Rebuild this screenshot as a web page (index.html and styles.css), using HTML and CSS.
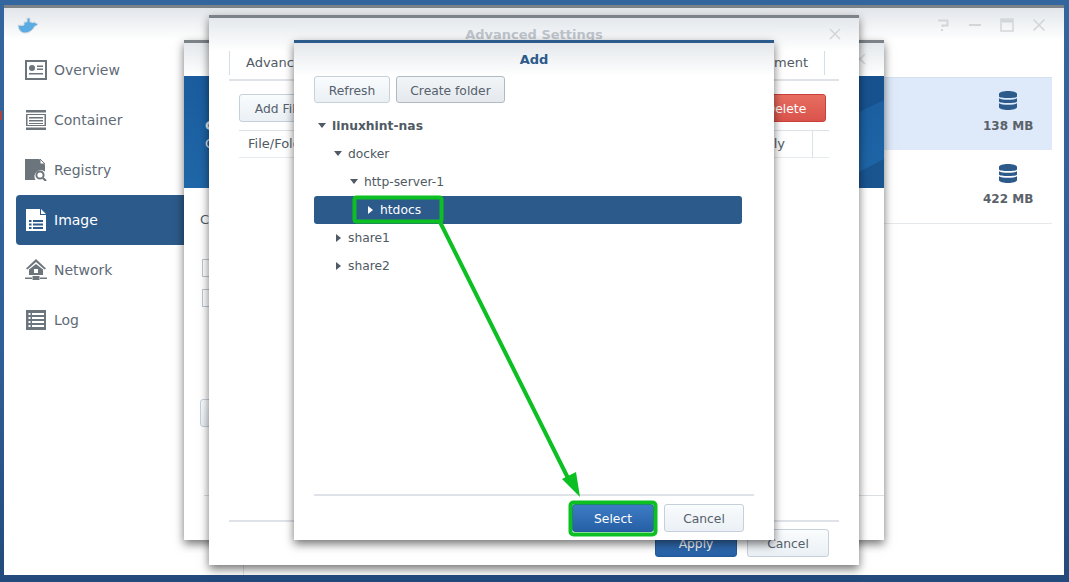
FILE: index.html
```html
<!DOCTYPE html>
<html lang="en">
<head>
  <meta charset="UTF-8" />
  <title>Docker - Add</title>
  <link rel="stylesheet" href="styles.css">
</head>
<body>
  <div class="desktop">
    <i class="desk-tick"></i>
    <!-- main docker window -->
    <div class="window main-win">
      <div class="win-head">
        <svg class="whale" width="22" height="18" viewBox="0 0 22 18">
          <path d="M1 9c2 .5 5 .5 6 0V6h3V2h3v4h2v1c1-1 2.500-1 3-.5.5 1 2 1 3 1.500-1 1.500-2.500 2-3.500 2.500C16 14 12 17 8 17 4 17 1.500 14 1 9z" fill="#5aace2" stroke="#d5dadf" stroke-width="1"/>
        </svg>
        <div class="win-tools">
          <svg width="14" height="14" viewBox="0 0 14 14"><path d="M2 2.500h9.500v5H6.500V9M6 11v2" fill="none" stroke="#d3d6d9" stroke-width="2"/></svg>
          <svg width="14" height="14" viewBox="0 0 14 14"><path d="M1 7h12" stroke="#d3d6d9" stroke-width="2"/></svg>
          <svg width="14" height="14" viewBox="0 0 14 14"><path d="M1 1h12v12H1z" fill="none" stroke="#d3d6d9" stroke-width="1.500"/><path d="M1 3h12" stroke="#d3d6d9" stroke-width="3"/></svg>
          <svg width="14" height="14" viewBox="0 0 14 14"><path d="M1.500 1.500l11 11M12.500 1.500l-11 11" stroke="#d3d6d9" stroke-width="1.600"/></svg>
        </div>
      </div>
      <div class="win-body">
        <ul class="side">
          <li class="side-item">
            <svg class="side-icon" viewBox="0 0 22 20"><path fill-rule="evenodd" d="M0 0h22v20H0zM2 2v16h18V2z"/><circle cx="7" cy="8" r="3"/><path d="M12 5.500h6v1.500h-6zM12 8.500h6V10h-6zM4 13h14v1.500H4z"/></svg>
            Overview
          </li>
          <li class="side-item">
            <svg class="side-icon" viewBox="0 0 22 20"><path d="M1 0h20v2.500H1zM1 17.500h20V20H1zM1 4h20v1H1zM1 15h20v1H1zM1 4h1.500v12H1zM19.500 4H21v12h-1.500zM4 7h14v1.500H4zM4 10h14v1.500H4zM4 13h14v1H4z"/></svg>
            Container
          </li>
          <li class="side-item">
            <svg class="side-icon" viewBox="0 0 22 22"><path d="M0 0h14l6 6v6.500a6.500 6.500 0 0 0-9.500 8.500H0z"/><path d="M15 0l5 5h-5z" fill="#fff" stroke="#6c757c"/><circle cx="15" cy="16" r="3.600" fill="none" stroke="#6c757c" stroke-width="2"/><path d="M18 19l3 3" stroke="#6c757c" stroke-width="2.200"/></svg>
            Registry
          </li>
          <li class="side-item on">
            <svg class="side-icon" viewBox="0 0 22 22"><path d="M1 0h14v6h6v16H1zM16 0l5 5h-5z" fill="#fff"/><path fill="#2c5a8a" d="M4 11h2.500v2H4zM8 11h10v2H8zM4 14.500h2.500v2H4zM8 14.500h10v2H8zM4 18h2.500v2H4zM8 18h10v2H8z"/></svg>
            Image
          </li>
          <li class="side-item">
            <svg class="side-icon" viewBox="0 0 22 22"><path d="M11 0L1 9.500l1.500 1L11 3l8.500 7.500 1.500-1z"/><path fill-rule="evenodd" d="M4 10.500L11 5l7 5.500V16H4zM9 10v4h4v-4z"/><path d="M0 18.500h7V20H0zM15 18.500h7V20h-7zM7.500 17h7v4h-7z"/></svg>
            Network
          </li>
          <li class="side-item">
            <svg class="side-icon" viewBox="0 0 22 22"><path fill-rule="evenodd" d="M1 1h20v20H1zM3.500 4v2h2V4zM7 4v2h12V4zM3.500 8v2h2V8zM7 8v2h12V8zM3.500 12v2h2v-2zM7 12v2h12v-2zM3.500 16v2h2v-2zM7 16v2h12v-2z"/></svg>
            Log
          </li>
        </ul>
        <div class="images">
          <div class="image-row on">
            <svg class="db" width="18" height="19" viewBox="0 0 18 19"><use href="#db"/></svg>
            <span>138 MB</span>
          </div>
          <div class="image-row">
            <svg class="db" width="18" height="19" viewBox="0 0 18 19"><use href="#db"/></svg>
            <span>422 MB</span>
          </div>
        </div>
      </div>
    </div>

    <!-- create container wizard, furthest back -->
    <div class="dialog wizard">
      <div class="dlg-head">
        <svg class="dlg-close" width="12" height="12" viewBox="0 0 12 12"><path d="M1 1l10 10M11 1L1 11" stroke="#d3d6d9" stroke-width="1.500"/></svg>
      </div>
      <div class="banner">
        <b>C</b>
        <span>C</span>
        <svg class="banner-art" width="25" height="112" viewBox="0 0 25 112">
          <path d="M0 96L25 83V112H0z" fill="#1a5590"/>
          <path d="M0 0H25V24L0 36z" fill="#17528f"/>
        </svg>
      </div>
      <div class="wizard-body">
        <p>C</p>
        <i class="check"></i>
        <i class="check"></i>
        <button class="btn wiz-btn">&nbsp;</button>
      </div>
      <div class="dlg-line wiz-line"></div>
    </div>

    <!-- advanced settings -->
    <div class="dialog advanced">
      <div class="dlg-head">
        <span class="dlg-title faded">Advanced Settings</span>
        <svg class="dlg-close" width="12" height="12" viewBox="0 0 12 12"><path d="M1 1l10 10M11 1L1 11" stroke="#d3d6d9" stroke-width="1.500"/></svg>
      </div>
      <div class="tabs">
        <span>Advanced Settings</span>
        <span>Environment</span>
      </div>
      <div class="adv-tools">
        <button class="btn">Add File</button>
        <button class="btn btn-red">Delete</button>
      </div>
      <div class="adv-table">
        <span>File/Folder</span>
        <span class="col-ro">Read-Only</span>
        <span class="col-end"></span>
      </div>
      <div class="dlg-foot">
        <button class="btn btn-blue">Apply</button>
        <button class="btn">Cancel</button>
      </div>
    </div>

    <!-- folder picker -->
    <div class="dialog picker">
      <div class="dlg-head">
        <span class="dlg-title">Add</span>
      </div>
      <div class="pick-tools">
        <button class="btn">Refresh</button>
        <button class="btn btn-alt">Create folder</button>
      </div>
      <ul class="tree">
        <li class="node lv0 root"><i class="arr down"></i>linuxhint-nas</li>
        <li class="node lv1"><i class="arr down"></i>docker</li>
        <li class="node lv2"><i class="arr down"></i>http-server-1</li>
        <li class="node lv3 sel"><i class="arr"></i>htdocs</li>
        <li class="node lv1"><i class="arr"></i>share1</li>
        <li class="node lv1"><i class="arr"></i>share2</li>
      </ul>
      <div class="pick-foot">
        <button class="btn btn-blue select">Select</button>
        <button class="btn">Cancel</button>
      </div>
    </div>

    <!-- green annotation drawn over the screenshot -->
    <svg class="marks" width="1069" height="582" viewBox="0 0 1069 582">
      <rect x="354.500" y="197.500" width="87" height="24" rx="2" fill="none" stroke="#0cbf22" stroke-width="4"/>
      <rect x="570.500" y="502.500" width="85" height="32" rx="3" fill="none" stroke="#0cbf22" stroke-width="4"/>
      <path d="M440 222L571 484" stroke="#0cbf22" stroke-width="4" fill="none"/>
      <path d="M580 497L562 479 576 472z" fill="#0cbf22"/>
    </svg>

    <svg width="0" height="0" class="defs">
      <symbol id="db" viewBox="0 0 18 19">
        <path fill="#2c5a8a" d="M0 3c0-4 18-4 18 0v2.500c0 2-18 2-18 0zM0 7.200c3 2 15 2 18 0v3.300c0 2-18 2-18 0zM0 12.200c3 2 15 2 18 0V16c0 4-18 4-18 0z"/>
      </symbol>
    </svg>
  </div>
</body>
</html>
```

FILE: styles.css
```css
* { box-sizing: border-box; }
html, body { margin: 0; padding: 0; }
body {
  font-family: 'DejaVu Sans', Verdana, sans-serif;
  font-size: 13px;
  color: #505a64;
}
.desktop {
  position: relative;
  width: 1069px;
  height: 582px;
  overflow: hidden;
  background: linear-gradient(to bottom, #33659f 0%, #2f5f98 60%, #234a7c 100%);
}
.desk-tick {
  position: absolute;
  left: 0;
  top: 111px;
  width: 2px;
  height: 9px;
  background: #a8453f;
}
.marks { position: absolute; left: 0; top: 0; }
.defs { position: absolute; }

/* main window */
.window, .dialog {
  position: absolute;
  display: flex;
  flex-direction: column;
  background: #fff;
}
.main-win {
  left: 4px;
  top: 5px;
  width: 1060px;
  height: 570px;
  border-top: 3px solid #7b8288;
}
.win-head {
  height: 32px;
  flex: none;
  display: flex;
  align-items: center;
  justify-content: space-between;
  padding: 0 18px 0 13px;
  background: linear-gradient(to bottom, #e2e6ea, #fff);
}
.whale { margin-top: 2px; }
.win-tools { display: flex; gap: 18px; margin-top: 2px; }
.win-body { flex: 1; display: flex; }
.side {
  list-style: none;
  margin: 5px 0 0 12px;
  padding: 0;
  width: 180px;
}
.side-item {
  height: 50px;
  display: flex;
  align-items: center;
  gap: 7px;
  padding-left: 9px;
  font-size: 14px;
  color: #5f6b77;
}
.side-item.on {
  background: #2c5a8a;
  color: #fff;
  border-radius: 4px 0 0 4px;
}
.side-icon { width: 22px; height: 22px; fill: #6c757c; flex: none; }
.images {
  flex: 1;
  margin: 0 0 0 47px;
  padding: 37px 12px 0 0;
  border-left: 1px solid #dfe3e7;
}
.image-row {
  height: 74px;
  padding: 0 19px 4px 0;
  display: flex;
  flex-direction: column;
  align-items: flex-end;
  justify-content: center;
  border-bottom: 1px solid #e6e9ec;
  font-size: 12px;
  font-weight: bold;
  color: #5b6169;
}
.image-row.on { height: 73px; background: #deeafa; border-top: 1px solid #d5e0ee; border-bottom: 0; }
.image-row span { width: 50px; text-align: center; white-space: nowrap; margin-top: 9px; }
.db { margin-right: 16px; }

/* dialogs */
.dialog { box-shadow: 0 4px 9px rgba(0, 0, 0, .55); border-top: 3px solid #7b8288; }
.dlg-head {
  height: 33px;
  flex: none;
  position: relative;
  display: flex;
  align-items: center;
  justify-content: center;
  background: linear-gradient(to bottom, #e4e8ec, #fff);
}
.dlg-title { font-weight: bold; color: #2c5a8a; font-size: 13px; }
.dlg-title.faded { color: #bcc3ca; }
.dlg-close {
  position: absolute;
  right: 18px;
  top: 10px;
}
.btn {
  font-family: inherit;
  font-size: 12.300px;
  height: 28px;
  padding: 1px 0 0;
  border: 1px solid #c6d0da;
  border-radius: 3px;
  color: #56616c;
  background: linear-gradient(to bottom, #fafcfd, #eaf0f5);
}
.btn-blue {
  border: 1px solid #245a9a;
  color: #fff;
  background: linear-gradient(to bottom, #3d7cc4, #2660a6);
}
.btn-red {
  border: 1px solid #c8403a;
  color: #fff;
  background: linear-gradient(to bottom, #e86e60, #d9534c);
}

/* wizard */
.wizard { left: 184px; top: 40px; width: 700px; height: 500px; }
.banner {
  height: 112px;
  flex: none;
  position: relative;
  display: flex;
  flex-direction: column;
  gap: 3px;
  padding: 42px 0 0 21px;
  color: #e6edf5;
  background: linear-gradient(to bottom, #1a5c9e 0%, #1f67a8 100%);
}
.banner-art { position: absolute; right: 0; top: 0; }
.wizard-body {
  flex: 1;
  padding: 0 16px;
  display: flex;
  flex-direction: column;
  align-items: flex-start;
}
.wizard-body p { margin: 24px 0 0 0; }
.check {
  width: 18px;
  height: 18px;
  border: 1px solid #bcc7d2;
  margin: 12px 0 0 2px;
}
.check:first-of-type { margin-top: 32px; }
.wiz-btn { width: 60px; margin-top: 92px; }
.wiz-line { height: 1px; background: #dcdfe2; margin: 0 0 44px 20px; }

/* advanced settings */
.advanced { left: 209px; top: 15px; width: 650px; height: 550px; }
.tabs {
  height: 30px;
  flex: none;
  margin: 0 20px;
  display: flex;
  align-items: flex-start;
  justify-content: space-between;
  border-bottom: 2px solid #dfe3e7;
}
.tabs span {
  height: 24px;
  line-height: 24px;
  padding: 0 16px;
  white-space: nowrap;
}
.tabs span:first-child { border-left: 1px solid #d5dee8; }
.tabs span:last-child { border-right: 1px solid #d5dee8; margin-right: 14px; }
.adv-tools {
  flex: none;
  display: flex;
  justify-content: space-between;
  margin: 13px 33px 8px 30px;
}
.adv-tools .btn { width: 80px; }
.adv-table {
  height: 28px;
  flex: none;
  margin: 0 30px;
  padding: 0 0 2px 9px;
  display: flex;
  align-items: center;
  border-top: 1px solid #dbe3ea;
  border-bottom: 1px solid #e6ebef;
}
.col-ro { margin-left: auto; padding-right: 27px; white-space: nowrap; }
.col-end { width: 17px; height: 28px; margin-bottom: -2px; border-left: 1px solid #dbe3ea; }
.dlg-foot {
  margin: auto 30px 8px 20px;
  padding: 7px 10px 0 0;
  display: flex;
  justify-content: flex-end;
  gap: 10px;
  border-top: 2px solid #dfe3e7;
  width: 610px;
}
.dlg-foot .btn { width: 82px; }

/* folder picker */
.picker {
  left: 294px;
  top: 40px;
  width: 480px;
  height: 500px;
  border-top-color: #2c5a8a;
}
.pick-tools { flex: none; display: flex; gap: 6px; padding: 0 20px; }
.pick-tools .btn { width: 76px; height: 27px; padding-top: 2px; }
.pick-tools .btn-alt { width: 109px; border-color: #b0bac4; background: linear-gradient(to bottom, #f2f5f7, #e4e9ee); }
.tree { list-style: none; margin: 9px 32px 0 20px; padding: 0; flex: 1; }
.node {
  height: 28px;
  padding-bottom: 1px;
  display: flex;
  align-items: center;
  border-radius: 3px;
  white-space: nowrap;
  font-size: 12.300px;
}
.lv0 { padding-left: 4px; }
.lv1 { padding-left: 20px; }
.lv2 { padding-left: 36px; }
.lv3 { padding-left: 52px; }
.root { font-weight: bold; }
.sel { background: #2c5a8a; color: #fff; }
.arr {
  flex: none;
  width: 0;
  height: 0;
  margin: 0 7px 0 2px;
  border-left: 5px solid #505a64;
  border-top: 4px solid transparent;
  border-bottom: 4px solid transparent;
}
.sel .arr { border-left-color: #fff; }
.arr.down {
  margin: 0 6px 0 0;
  border-left: 4px solid transparent;
  border-right: 4px solid transparent;
  border-top: 5px solid #505a64;
  border-bottom: 0;
}
.pick-foot {
  flex: none;
  margin: 0 20px;
  padding: 8px 10px 8px 0;
  display: flex;
  justify-content: flex-end;
  gap: 10px;
  border-top: 2px solid #dfe3e7;
}
.pick-foot .btn { width: 80px; }
.pick-foot .select { width: 82px; }
```
